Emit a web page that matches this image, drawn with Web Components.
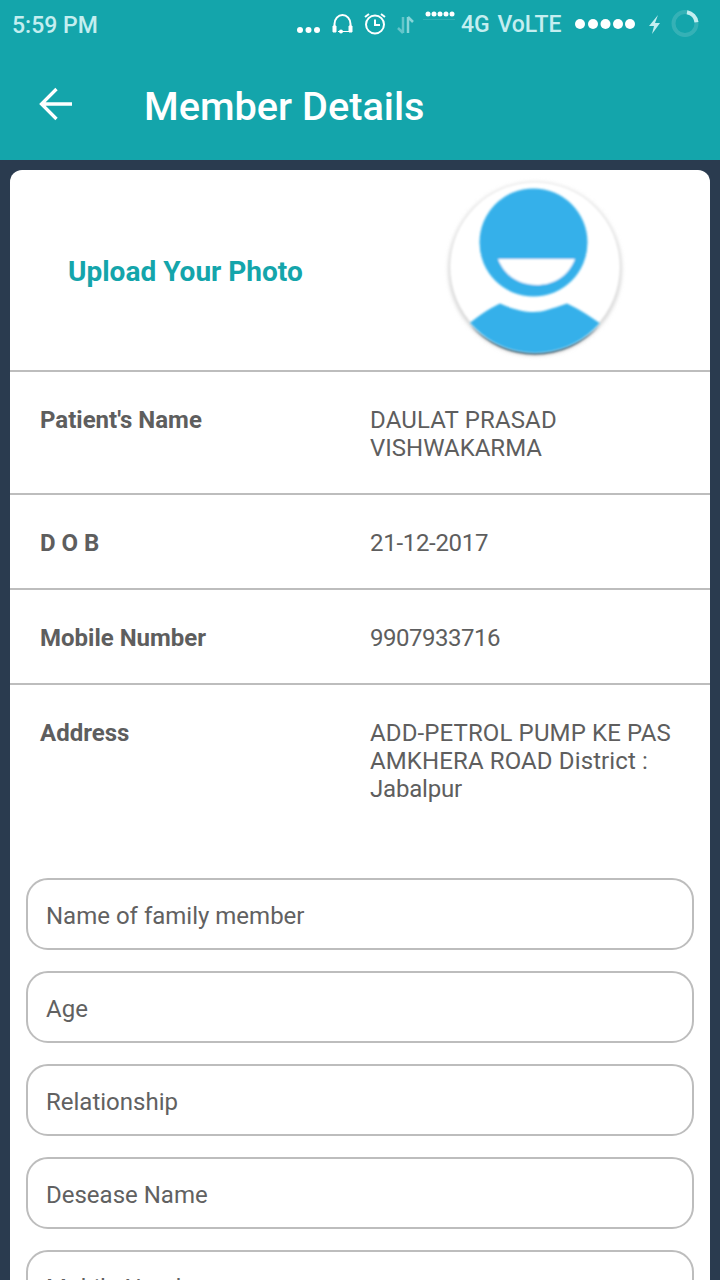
<!DOCTYPE html>
<html><head><meta charset="utf-8">
<style>
html,body{margin:0;padding:0;height:1280px;overflow:hidden;background:#2a3b4f;font-family:Roboto,sans-serif}
</style></head>
<body>
<app-header title-text="Member Details"></app-header>
<detail-card>
  <photo-row></photo-row>
  <info-row label="Patient's Name" h="123" ls=".15">DAULAT PRASAD<br><span style="letter-spacing:0">VISHWAKARMA</span></info-row>
  <info-row label="D O B" h="95" ls="-.3">21-12-2017</info-row>
  <info-row label="Mobile Number" h="95" ls="-.5">9907933716</info-row>
  <info-row label="Address" last h="193" ls=".12">ADD-PETROL PUMP KE PAS<br>AMKHERA ROAD District :<br><span style="letter-spacing:-.2px">Jabalpur</span></info-row>
  <form-field>Name of family member</form-field>
  <form-field>Age</form-field>
  <form-field>Relationship</form-field>
  <form-field>Desease Name</form-field>
  <form-field>Mobile Number</form-field>
</detail-card>
<script>
class AppHeader extends HTMLElement{
  constructor(){super();const s=this.attachShadow({mode:'open'});
  s.innerHTML=`<style>
  :host{display:block;height:160px;background:#14a5ab;color:#fff;font-family:Roboto,sans-serif}
  .status{height:52px;display:flex;align-items:center;padding:0 0 3px 12px;box-sizing:border-box;position:relative}
  .time{font-size:23px;font-weight:500;color:#c4eef0;line-height:26px;margin-top:2px}
  .icons{position:absolute;left:280px;top:0;width:440px;height:60px}
  .net{position:absolute;left:181px;top:12px;font-size:23px;font-weight:500;color:#c4eef0;line-height:26px;word-spacing:2px;white-space:nowrap}
  .bar{height:108px;display:flex;align-items:center}
  .back{margin:0 0 4px 38px;width:36px;height:36px;display:block}
  h1{margin:2px 0 0 70px;font-size:39.700px;font-weight:500;line-height:44px}
  </style>
  <div class="status"><span class="time">5:59 PM</span>
    <div class="icons">
      <svg width="440" height="60" viewBox="0 0 440 60" fill="none">
        <g fill="#fff"><circle cx="20" cy="30" r="3"/><circle cx="28.500" cy="30" r="3"/><circle cx="37" cy="30" r="3"/></g>
        <path d="M54.500 30V24a8 9 0 0 1 16 0V30" stroke="#fff" stroke-width="2"/>
        <path d="M53 26h3v6h-3zM69 26h3v6h-3zM58 31.500h12" stroke="#fff" stroke-width="1" fill="#fff"/>
        <circle cx="61" cy="31.500" r="2" fill="#fff"/>
        <circle cx="95" cy="24.500" r="9" stroke="#fff" stroke-width="2"/>
        <path d="M95 19.500v5.500h5M85 17l4-3M105 17l-4-3" stroke="#fff" stroke-width="2"/>
        <path d="M123 33V17M123 33l-5-5" stroke="#c4eef0" stroke-opacity=".45" stroke-width="2.500"/>
        <path d="M128 33V17M128 17l5 5" stroke="#c4eef0" stroke-opacity=".65" stroke-width="2.500"/>
        <g fill="#fff"><circle cx="148" cy="14" r="2.500"/><circle cx="154" cy="14" r="2.500"/><circle cx="160" cy="14" r="2.500"/><circle cx="166" cy="14" r="2.500"/><circle cx="172" cy="14" r="2.500"/></g>
        <path d="M143 19.500H175" stroke="#fff" stroke-opacity=".12" stroke-width="1"/>
        <g fill="#fff"><circle cx="300" cy="24" r="5"/><circle cx="313" cy="24" r="5"/><circle cx="325.500" cy="24" r="5"/><circle cx="338" cy="24" r="5"/><circle cx="350" cy="24" r="5"/></g>
        <path d="M378 15l-9 11h5l-2 8 8-11h-5z" fill="#c4eef0"/>
        <circle cx="405" cy="23.500" r="11.500" stroke="#fff" stroke-opacity=".14" stroke-width="4"/>
        <path d="M407 12.200a11.500 11.500 0 0 1 9.500 10" stroke="#c4eef0" stroke-width="4"/>
      </svg>
      <span class="net">4G VoLTE</span>
    </div>
  </div>
  <div class="bar">
    <svg class="back" viewBox="0 0 36 36" fill="none"><path d="M4 18H34M18.500 3L3.500 18 18.500 33" stroke="#fff" stroke-width="3.300"/></svg>
    <h1>${this.getAttribute('title-text')}</h1>
  </div>`;}
}
class DetailCard extends HTMLElement{
  constructor(){super();this.attachShadow({mode:'open'}).innerHTML=`<style>
  :host{display:block;margin:10px 10px 0;background:#fff;border-radius:12px 12px 0 0;height:1110px;overflow:hidden;color:#5a5a5a;font-family:Roboto,sans-serif}
  </style><slot></slot>`;}
}
class PhotoRow extends HTMLElement{
  constructor(){super();this.attachShadow({mode:'open'}).innerHTML=`<style>
  :host{display:flex;height:202px;box-sizing:border-box;border-bottom:2px solid #bdbdbd;align-items:flex-start}
  .t{margin:86px 0 0 58px;width:372px;font-size:28px;font-weight:700;color:#14a5ab;line-height:32px;white-space:nowrap}
  svg{display:block;margin-top:5px}
  </style><div class="t">Upload Your Photo</div>
  <svg width="190" height="190" viewBox="0 0 190 190">
    <defs><clipPath id="c"><circle cx="95" cy="93" r="85"/></clipPath>
    <filter id="b" x="-10%" y="-10%" width="120%" height="120%"><feGaussianBlur stdDeviation="2"/></filter>
    <filter id="s" x="-5%" y="-5%" width="110%" height="110%"><feGaussianBlur stdDeviation=".9"/></filter></defs>
    <circle cx="95" cy="94" r="86.500" fill="#d2d2d2" filter="url(#b)"/>
    <path d="M30 150A86 86 0 0 0 160 150A94 94 0 0 1 30 150Z" fill="#5f7480" filter="url(#s)"/>
    <circle cx="95" cy="92" r="85" fill="#fff" filter="url(#s)"/>
    <g filter="url(#s)">
    <circle cx="93.500" cy="67.500" r="54" fill="#35b0ea"/>
    <path d="M58 84H135C128 102 113 110 96.500 110S65 102 58 84Z" fill="#fff"/>
    <g clip-path="url(#c)"><path d="M25 152C38 141 48 134 60 128.500C72 134 84 137 94 137S110 134 127 128.500C139 134 150 141 165 152L150 190H40Z" fill="#35b0ea"/></g>
    </g>
  </svg>`;}
}
class InfoRow extends HTMLElement{
  constructor(){super();const s=this.attachShadow({mode:'open'});
  const h=this.getAttribute('h');const last=this.hasAttribute('last');
  s.innerHTML=`<style>
  :host{display:grid;grid-template-columns:360px 1fr;height:${h}px;box-sizing:border-box;padding-top:34px;${last?'':'border-bottom:2px solid #bdbdbd;'}font-size:24px;line-height:28px}
  .l{padding-left:30px;font-weight:700;color:#5e5e5e}
  .v{color:#5e5e5e;letter-spacing:${this.getAttribute('ls')}px;white-space:nowrap}
  </style><div class="l">${this.getAttribute('label')}</div><div class="v"><slot></slot></div>`;}
}
class FormField extends HTMLElement{
  constructor(){super();this.attachShadow({mode:'open'}).innerHTML=`<style>
  :host{display:flex;align-items:center;box-sizing:border-box;height:72px;margin:0 16px 21px;padding:4px 0 0 18px;border:2px solid #bdbdbd;border-radius:22px;font-size:24px;color:#616161;white-space:nowrap}
  </style><slot></slot>`;}
}
customElements.define('app-header',AppHeader);
customElements.define('detail-card',DetailCard);
customElements.define('photo-row',PhotoRow);
customElements.define('info-row',InfoRow);
customElements.define('form-field',FormField);
</script>
</body></html>
